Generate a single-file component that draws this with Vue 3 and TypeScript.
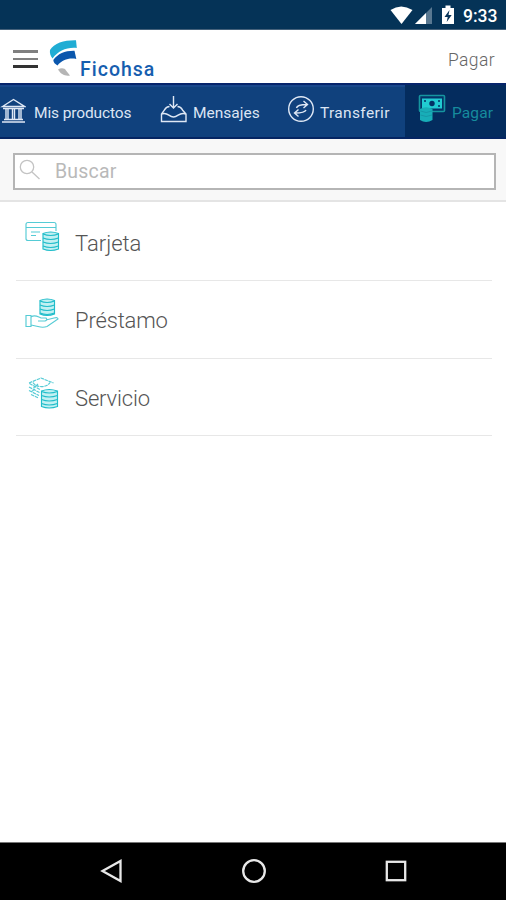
<script setup lang="ts">
import { ref } from 'vue'

interface Tab { id: string; label: string }
interface Item { id: string; label: string }

const tabs: Tab[] = [
  { id: 'products', label: 'Mis productos' },
  { id: 'messages', label: 'Mensajes' },
  { id: 'transfer', label: 'Transferir' },
  { id: 'pay', label: 'Pagar' },
]
const items: Item[] = [
  { id: 'card', label: 'Tarjeta' },
  { id: 'loan', label: 'Préstamo' },
  { id: 'service', label: 'Servicio' },
]
const active = ref('pay')
const query = ref('')
</script>

<template>
  <div class="screen">
    <div class="status">
      <svg class="signals" width="66" height="22" viewBox="390 4 66 22">
        <path d="M390.500 10Q401 3 412.500 10L401.500 24Z" fill="#fff" />
        <path d="M432 7V24H415Z" fill="#597891" />
        <path d="M426 13V24H415Z" fill="#fff" />
        <path d="M442 8h3.500V5.500h5V8H454V24H442Z" fill="#fff" />
        <path d="M449.500 10l-5 7h3.200l-1 5 5-7h-3.200Z" fill="#08345a" />
      </svg>
      <span class="clock">9:33</span>
    </div>

    <header class="header">
      <button class="burger" aria-label="Menú"><i /><i /><i /></button>
      <div class="brand">
        <svg class="mark" width="28" height="38" viewBox="49 39 28 38">
          <path d="M50 50C54 43 65 40 76 40.300L76.800 48C67 47 58 51 52.500 58.500C50.500 56 49.500 53 50 50Z" fill="#20add4" />
          <path d="M53.300 60C58 53.500 65 50.500 74.500 50.700L76.300 59C69 57.500 62 60 57.500 65.500C55 64 53.500 62.500 53.300 60Z" fill="#0b57ad" />
          <path d="M58 69.500C61 67.500 65 68 66 70.500L70 75.500C65 76.500 60.500 74 58 69.500Z" fill="#b5b5b5" />
        </svg>
        <span class="name">Ficohsa</span>
      </div>
      <span class="title">Pagar</span>
    </header>

    <nav class="tabs">
      <button v-for="t in tabs" :key="t.id" :class="['tab', t.id, { active: active === t.id }]" @click="active = t.id">
        <svg v-if="t.id === 'products'" width="26" height="26" viewBox="0 98 26 26" class="line">
          <path d="M2.500 106.500L13.500 99.500L24.500 106.500ZM3 108.500H24M4 119.500H23M2 122H25" />
          <path d="M6 109V119M8 109V119M12.500 109V119M14.500 109V119M19 109V119M21 109V119" />
        </svg>
        <svg v-else-if="t.id === 'messages'" width="28" height="28" viewBox="160 95 28 28" class="line">
          <path d="M173.500 96V108M169.500 104L173.500 108L177.500 104" />
          <path d="M169.500 106.500C166 106.500 165.500 108 164.500 110L161.500 114V121.500H186V114L182.500 110C181.500 108 181 106.500 177.500 106.500M161.500 114C168 111.500 168.500 117 173.500 117S179 111.500 186 114" />
        </svg>
        <svg v-else-if="t.id === 'transfer'" width="28" height="28" viewBox="287 95 28 28" class="line">
          <circle cx="301" cy="109" r="12.300" />
          <path d="M296.500 108C297 105.500 300 104.500 307 104.500M303.500 101L307.500 104.500L303.500 108M306 110C305 112.500 302 113 295 113M298.500 109.500L294.500 113L298.500 116.500" />
        </svg>
        <svg v-else width="28" height="29" viewBox="418 94 28 29">
          <rect x="419.500" y="95.500" width="25" height="16" rx="1" fill="#043568" stroke="#16959f" stroke-width="1.600" />
          <rect x="422" y="98.500" width="20" height="10" fill="#21cbd2" />
          <circle cx="432" cy="103.500" r="2.700" fill="#033265" />
          <path d="M424 101h2M438 106h2M438 101h2" stroke="#033265" stroke-width="1.500" />
          <path d="M420 109Q426 105.500 432.500 109V120Q426 124 420 120Z" fill="#18aeb8" />
          <path d="M420.500 111Q426 114 432 111M420.500 115Q426 118 432 115" fill="none" stroke="#168e9f" stroke-width=".7" />
        </svg>
        <span>{{ t.label }}</span>
      </button>
    </nav>

    <div class="search">
      <label class="field">
        <svg width="22" height="22" viewBox="0 0 22 22" fill="none" stroke="#c3c3c3" stroke-width="1.300">
          <circle cx="8" cy="8" r="6.700" /><path d="M13 13L20.500 20" />
        </svg>
        <input v-model="query" type="text" placeholder="Buscar">
      </label>
    </div>

    <ul class="list">
      <li v-for="item in items" :key="item.id" class="row">
        <svg v-if="item.id === 'card'" width="36" height="36" viewBox="24 217 36 36" class="cyan">
          <path d="M41 240.500H28Q26 240.500 26 238.500V224.500Q26 222.500 28 222.500H54Q56 222.500 56 224.500V231M26 227.500H56M31 232H40M31 235.500H36" />
          <g class="coins"><path d="M43 233.500Q50.500 230.500 58.500 233.500V249Q50.500 252 43 249Z" /><path d="M43 234Q50.500 237 58.500 234M43 238Q50.500 241 58.500 238M43 242Q50.500 245 58.500 242M43 246Q50.500 249 58.500 246" /></g>
        </svg>
        <svg v-else-if="item.id === 'loan'" width="36" height="36" viewBox="24 295 36 36" class="cyan">
          <g class="coins"><path d="M40 299.500Q47 296.500 54.500 299.500V313Q47 316 40 313Z" /><path d="M40 300Q47 303 54.500 300M40 304Q47 307 54.500 304M40 308Q47 311 54.500 308M40 312Q47 315 54.500 312" /></g>
          <path d="M26 314.500H31V325.500H26ZM31 316C35 313 38 316 41 317H46Q48 319 45 320H38M46 319L54 317Q58 316 58 318L47 325.500Q43 327 38 325.500L31 324" />
        </svg>
        <svg v-else width="36" height="36" viewBox="24 373 36 36" class="cyan">
          <path d="M29 382L41 377L53.500 382M29.500 382.500L40 388.500M29 386L39.500 391.500M29 389.500L39 394.500M31 393.500L38.500 397M33 381.500C36 387 47 387 50 381.500M33.500 387L38 383M31 391L35 388" stroke-dasharray="3.500 .7" />
          <g class="coins"><path d="M41.500 390Q49 387 57.500 390V405.500Q49 408.500 41.500 405.500Z" /><path d="M41.500 390.500Q49 393.500 57.500 390.500M41.500 394.500Q49 397.500 57.500 394.500M41.500 398.500Q49 401.500 57.500 398.500M41.500 402.500Q49 405.500 57.500 402.500" /></g>
        </svg>
        <span :class="['label', item.id]">{{ item.label }}</span>
      </li>
    </ul>

    <footer class="system">
      <svg width="24" height="26" viewBox="0 0 24 26"><path d="M20.500 3V23L2.500 13Z" /></svg>
      <svg width="26" height="26" viewBox="0 0 26 26"><circle cx="13" cy="13" r="10.800" /></svg>
      <svg width="24" height="24" viewBox="0 0 24 24"><rect x="2.800" y="2.800" width="18.400" height="18.400" /></svg>
    </footer>
  </div>
</template>

<style>
body { margin: 0; background: #fff; }
</style>

<style scoped>
* { box-sizing: border-box; }
.screen { width: 506px; height: 900px; display: flex; flex-direction: column; overflow: hidden; background: #fff; font-family: Roboto, "Liberation Sans", sans-serif; }
svg { flex: none; display: block; }
button { border: 0; margin: 0; padding: 0; background: none; font: inherit; }
.status { height: 30px; flex: none; display: flex; align-items: center; justify-content: flex-end; padding-right: 9px; gap: 7px; background: #053357; border-bottom: 1px solid #45617a; }
.clock { color: #fff; font-size: 17.500px; font-weight: 500; width: 34px; line-height: 30px; padding-top: 2px; }
.header { height: 53px; flex: none; display: flex; align-items: flex-start; padding: 0 11px 0 13px; }
.burger { width: 25px; display: flex; flex-direction: column; gap: 5px; margin-top: 20px; }
.burger i { height: 2.500px; background: #808080; }
.burger i:last-child { background: #333; }
.brand { display: flex; margin-left: 11px; }
.mark { margin-top: 9px; }
.name { color: #165eaf; font-size: 19.500px; font-weight: 500; letter-spacing: 1px; line-height: 24px; margin: 28px 0 0 3px; }
.title { color: #666; font-size: 17.500px; font-weight: 300; letter-spacing: .4px; line-height: 22px; margin: 19px 0 0 auto; }
.tabs { height: 56px; flex: none; display: grid; grid-template-columns: 147px 127px 131px 101px; background: #10417d; border-top: 2px solid #07256c; border-bottom: 2px solid #052563; box-shadow: inset 0 2px #19488b; }
.tab { display: flex; align-items: center; color: #dce5f4; font-size: 15.500px; white-space: nowrap; }
.tab span { line-height: 20px; padding-top: 3px; }
.products { gap: 8px; letter-spacing: -.12px; }
.messages { padding-left: 13px; gap: 5px; }
.transfer { padding-left: 13px; gap: 5px; letter-spacing: .35px; }
.transfer svg, .messages svg { margin-bottom: 4px; }
.pay { padding-left: 13px; gap: 6px; letter-spacing: .1px; }
.pay svg { margin-bottom: 5px; }
.pay.active { background: #042c5e; color: #168b9d; }
.line { fill: none; stroke: #dfe8f5; stroke-width: 1.400; }
.search { height: 63px; flex: none; padding: 14px 10px 12px 13px; background: #f8f8f8; border-bottom: 2px solid #e4e4e4; }
.field { display: flex; height: 37px; background: #fff; border: 2px solid #b5b5b5; padding: 4px 0 0 4px; }
.field input { flex: 1; min-width: 0; height: 24px; border: 0; outline: 0; background: none; padding: 0; margin: 1px 0 0 14px; font: 400 19.500px/24px Roboto, sans-serif; letter-spacing: .2px; }
.field input::placeholder { color: #b9b9b9; opacity: 1; }
.list { flex: 1; margin: 0; padding: 0 14px 0 16px; list-style: none; }
.row { height: 77.500px; display: flex; align-items: flex-start; padding: 15px 0 0 8px; border-bottom: 1.500px solid #e7e7e7; }
.row:first-child { height: 79px; }
.label { margin: 11px 0 0 15px; color: #555; font-size: 22px; font-weight: 300; line-height: 28px; letter-spacing: -.15px; }
.label.card { margin-top: 13px; letter-spacing: 0; }
.cyan { fill: none; stroke: #55cbd5; stroke-width: 1.150; }
.coins { fill: #c2f0f2; stroke: #20bdca; }
.coins path + path { fill: none; }
.system { height: 58px; flex: none; display: flex; align-items: center; padding-left: 100px; background: #000; border-top: 1px solid #777; }
.system svg { position: relative; top: -1px; fill: none; stroke: #e8e8e8; stroke-width: 2.300; }
.system svg + svg { margin-left: 117px; }
</style>
